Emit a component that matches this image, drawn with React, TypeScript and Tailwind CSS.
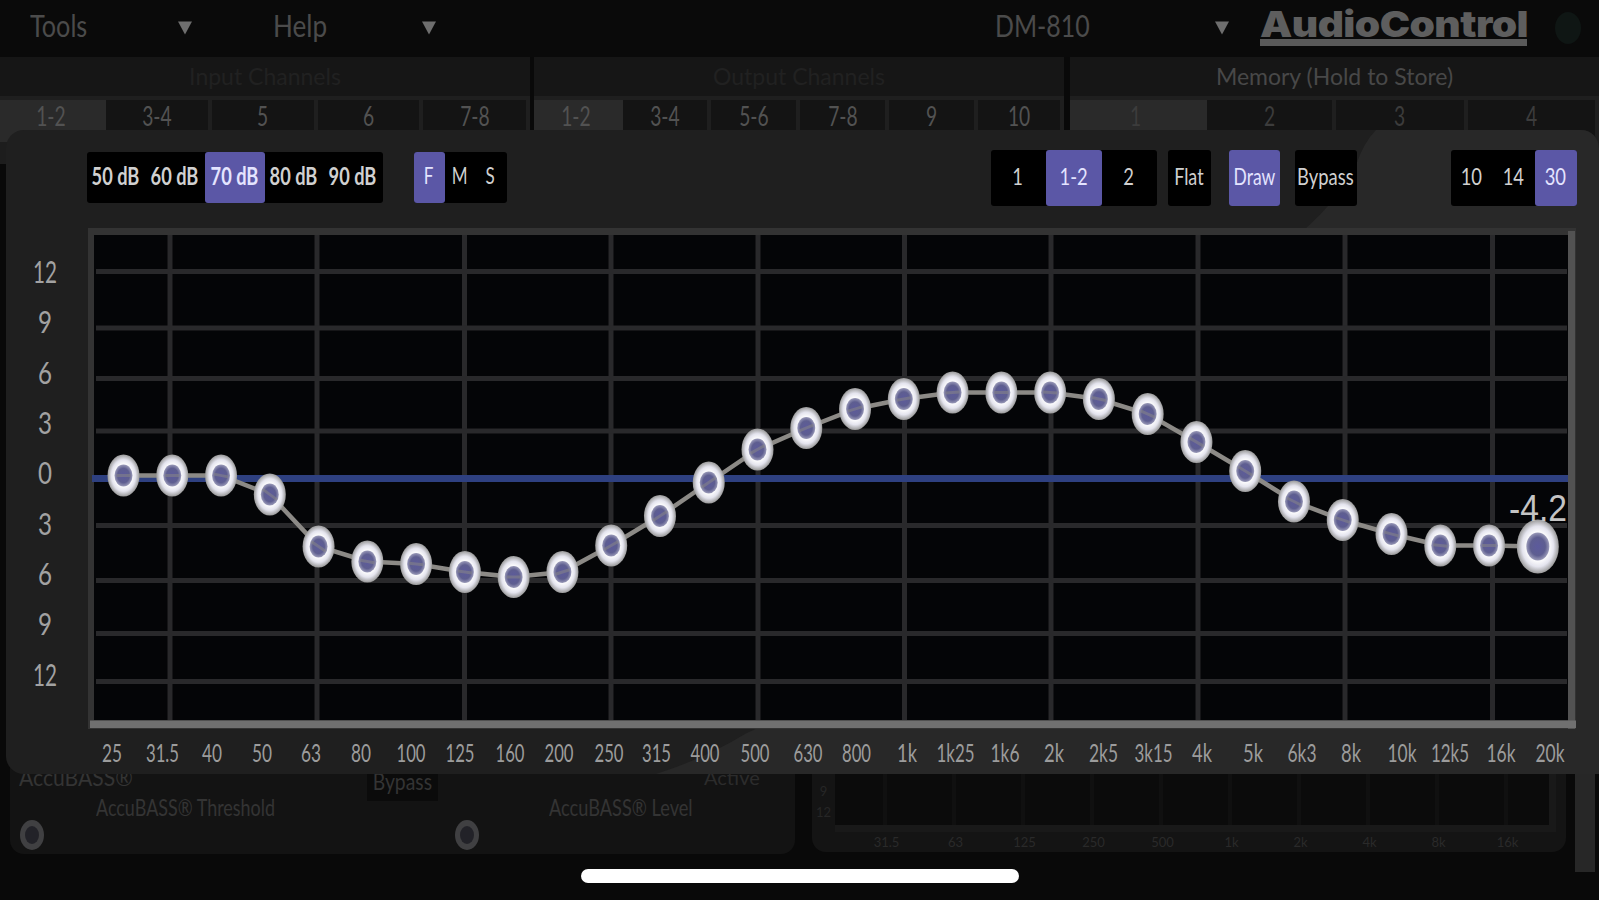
import { useState } from 'react';
import clsx from 'clsx';

const inputTabs = [
  { name: '1-2', width: 'w-[106px]' },
  { name: '3-4', width: 'w-[106px]' },
  { name: '5', width: 'w-[106px]' },
  { name: '6', width: 'w-[105px]' },
  { name: '7-8', width: 'w-[107px]' },
];

const outputTabs = [
  { name: '1-2', width: 'w-[89px]' },
  { name: '3-4', width: 'w-[88px]' },
  { name: '5-6', width: 'w-[89px]' },
  { name: '7-8', width: 'w-[89px]' },
  { name: '9', width: 'w-[89px]' },
  { name: '10', width: 'w-[86px]' },
];

const memoryTabs = [
  { name: '1', width: 'w-[137px]' },
  { name: '2', width: 'w-[129px]' },
  { name: '3', width: 'w-[132px]' },
  { name: '4', width: 'w-[131px]' },
];

// Chart geometry, relative to the top left corner of the panel at (6, 130)
const levels = [
  { label: '12', y: 142, line: 141.5 },
  { label: '9', y: 192, line: 198 },
  { label: '6', y: 242.5, line: 248.5 },
  { label: '3', y: 293, line: 301 },
  { label: '0', y: 343, line: 0 },
  { label: '3', y: 394, line: 395.5 },
  { label: '6', y: 444, line: 450.5 },
  { label: '9', y: 494, line: 503.5 },
  { label: '12', y: 545, line: 551.5 },
];

const gridX = [164, 311, 458.5, 605, 752, 898.5, 1045, 1192, 1339, 1486.5];

const bands = [
  { label: '25', x: 106, y: 345.5 },
  { label: '31.5', x: 156.5, y: 345.5 },
  { label: '40', x: 206, y: 345.5 },
  { label: '50', x: 256, y: 364.5 },
  { label: '63', x: 305, y: 416.5 },
  { label: '80', x: 355, y: 431.5 },
  { label: '100', x: 405, y: 434 },
  { label: '125', x: 454, y: 442 },
  { label: '160', x: 504, y: 447 },
  { label: '200', x: 553, y: 442 },
  { label: '250', x: 603, y: 415.5 },
  { label: '315', x: 650.5, y: 386 },
  { label: '400', x: 699, y: 352.5 },
  { label: '500', x: 749, y: 319.5 },
  { label: '630', x: 802, y: 298 },
  { label: '800', x: 850.5, y: 279 },
  { label: '1k', x: 901, y: 269 },
  { label: '1k25', x: 949.5, y: 262.5 },
  { label: '1k6', x: 999, y: 262.5 },
  { label: '2k', x: 1048, y: 262.5 },
  { label: '2k5', x: 1097.5, y: 269 },
  { label: '3k15', x: 1147.5, y: 284 },
  { label: '4k', x: 1196, y: 312 },
  { label: '5k', x: 1247, y: 341 },
  { label: '6k3', x: 1296, y: 371.5 },
  { label: '8k', x: 1345, y: 390 },
  { label: '10k', x: 1396, y: 404 },
  { label: '12k5', x: 1444, y: 415.5 },
  { label: '16k', x: 1495, y: 415.5 },
  { label: '20k', x: 1544, y: 416.5 },
];

const pointX = (i: number) => 117.5 + i * 48.77;

function Caret({ className }: { className?: string }) {
  return (
    <svg className={clsx('w-[14px] h-[14px] shrink-0', className)} viewBox="0 0 16 15">
      <path d="M0 0H16L8 15Z" fill="#6e6e6e" />
    </svg>
  );
}

type TabGroupProps = {
  title: string;
  titleClass: string;
  textClass: string;
  tabs: { name: string; width: string }[];
  className?: string;
};

function TabGroup({ title, titleClass, textClass, tabs, className }: TabGroupProps) {
  const [active, setActive] = useState(0);
  return (
    <section className={clsx('flex flex-col bg-[#161616]', className)}>
      <div className="h-[39px] flex items-center justify-center">
        <span className={clsx('text-[23px] leading-none whitespace-nowrap', titleClass)}>{title}</span>
      </div>
      <div className="flex h-[46px] border-t-4 border-[#1f1f1f]">
        {tabs.map((tab, i) => (
          <button
            key={tab.name}
            onClick={() => setActive(i)}
            className={clsx(
              'h-full shrink-0 flex justify-center pt-[3px] text-[26px] leading-none',
              tab.width,
              textClass,
              i === active ? 'bg-[#2a2a2a] pr-[5px]' : 'bg-[#141414] border-r-4 border-[#1f1f1f]'
            )}
          >
            <span className="scale-x-[0.74]">{tab.name}</span>
          </button>
        ))}
      </div>
    </section>
  );
}

type SegmentedProps = {
  options: string[];
  initial: string | null;
  optionClass: string;
  textClass: string;
  className?: string;
};

function Segmented({ options, initial, optionClass, textClass, className }: SegmentedProps) {
  const [selected, setSelected] = useState(initial);
  return (
    <div className={clsx('flex shrink-0 bg-black rounded-[3px]', className)}>
      {options.map((option) => (
        <button
          key={option}
          onClick={() => setSelected(option)}
          className={clsx(
            'h-full flex items-center justify-center rounded-[3px] whitespace-nowrap leading-none pb-1 pr-[2px]',
            optionClass,
            selected === option ? 'bg-[#5b57a6] text-[#e4e4ff]' : 'text-[#d0d0d0]'
          )}
        >
          <span className={clsx('shrink-0', textClass)}>{option}</span>
        </button>
      ))}
    </div>
  );
}

function Chart() {
  const path = bands.map((band, i) => `${pointX(i)},${band.y}`).join(' ');
  const last = bands.length - 1;
  return (
    <svg
      className="relative w-[1593px] h-[548px] block"
      viewBox="0 96 1593 548"
      fontFamily="Lato, 'Liberation Sans', sans-serif"
    >
      <defs>
        <radialGradient id="knob">
          <stop offset="0.5" stopColor="#ffffff" />
          <stop offset="0.75" stopColor="#e4e4ee" />
          <stop offset="1" stopColor="#999999" />
        </radialGradient>
        <radialGradient id="core">
          <stop offset="0" stopColor="#5c5a9c" />
          <stop offset="0.65" stopColor="#5e5e90" />
          <stop offset="1" stopColor="#9a9ab8" />
        </radialGradient>
      </defs>

      <rect x="82" y="98" width="1488" height="501" fill="#333333" />
      <rect x="88" y="105" width="1474" height="485" fill="#040507" />

      <g fill="#29292b">
        {gridX.map((x) => (
          <rect key={x} x={x - 2.5} y="105" width="5" height="485" />
        ))}
        {levels.map((l, i) => l.line > 0 && (
          <rect key={i} x="90" y={l.line - 2.5} width="1471" height="5" />
        ))}
      </g>

      <rect x="1562" y="101" width="7" height="498" fill="#525252" />
      <rect x="84" y="590.5" width="1486" height="7.5" fill="#707070" />
      <rect x="86" y="345" width="1476" height="7" fill="#2e4080" />

      <polyline points={path} fill="none" stroke="#8c8a86" strokeWidth="4.5" />
      {bands.map((band, i) => (
        <g key={band.label}>
          <ellipse cx={pointX(i)} cy={band.y} rx={i === last ? 21 : 16} ry={i === last ? 27 : 21} fill="url(#knob)" />
          <ellipse cx={pointX(i)} cy={band.y} rx={i === last ? 11.5 : 9} ry={i === last ? 14 : 11} fill="url(#core)" />
        </g>
      ))}
      {/* the curve stays faintly visible through the cores of the knobs */}
      {bands.slice(0, last).map((band, i) => {
        const slope = (bands[i + 1].y - bands[Math.max(i - 1, 0)].y) / 97.5;
        return (
          <line
            key={band.label}
            x1={pointX(i) - 7}
            y1={band.y - 7 * slope}
            x2={pointX(i) + 7}
            y2={band.y + 7 * slope}
            stroke="#8c8a86"
            strokeWidth="3"
            opacity="0.5"
          />
        );
      })}

      <text
        x="1503"
        y="391"
        fontSize="36"
        fontFamily="'Liberation Sans', sans-serif"
        fill="#c4c4c4"
        textLength="58"
        lengthAdjust="spacingAndGlyphs"
      >
        -4.2
      </text>

      <g fill="#a2a2a2" fontSize="31" textAnchor="middle">
        {levels.map((l, i) => (
          <text
            key={i}
            x="39"
            y={l.y + 11}
            textLength={l.label.length > 1 ? 24 : 14}
            lengthAdjust="spacingAndGlyphs"
          >
            {l.label}
          </text>
        ))}
      </g>
      <g fill="#9c9c9c" fontSize="25" textAnchor="middle">
        {bands.map((band) => (
          <text
            key={band.label}
            x={band.x}
            y="632"
            textLength={band.label === '31.5' ? 33 : band.label.length * 9 + 2}
            lengthAdjust="spacingAndGlyphs"
          >
            {band.label}
          </text>
        ))}
      </g>
    </svg>
  );
}

function EqPanel() {
  return (
    <div className="absolute left-[6px] top-[130px] w-[1593px] h-[644px] rounded-l-[18px] rounded-tr-[18px] overflow-hidden bg-[#1f1f1f]">
      {/* glossy highlight over the lower right half */}
      <svg className="absolute inset-0 w-full h-full" viewBox="0 0 1593 644">
        <path d="M1370 0Q1358 12 1350 35C1330 75 1300 98 1270 125C1080 340 880 540 739 604Q700 628 650 644H1593V0Z" fill="#282828" />
      </svg>
      <div className="relative flex h-[96px] pl-[81px] pt-[20px] items-start">
        <Segmented
          options={['50 dB', '60 dB', '70 dB', '80 dB', '90 dB']}
          initial="70 dB"
          optionClass="w-[59.2px]"
          textClass="text-[24px] font-bold scale-x-[0.76]"
          className="h-[51px] mt-[2px]"
        />
        <Segmented
          options={['F', 'M', 'S']}
          initial="F"
          optionClass="w-[31px]"
          textClass="text-[23px] scale-x-[0.74]"
          className="h-[51px] mt-[2px] ml-[31px]"
        />
        <Segmented
          options={['1', '1-2', '2']}
          initial="1-2"
          optionClass="w-[55.5px]"
          textClass="text-[23px] scale-x-[0.8]"
          className="h-[56px] ml-[484px]"
        />
        <Segmented
          options={['Flat']}
          initial={null}
          optionClass="w-[43px]"
          textClass="text-[23px] scale-x-[0.78]"
          className="h-[56px] ml-[11px]"
        />
        <Segmented
          options={['Draw']}
          initial="Draw"
          optionClass="w-[51px]"
          textClass="text-[23px] scale-x-[0.76]"
          className="h-[56px] ml-[18px]"
        />
        <Segmented
          options={['Bypass']}
          initial={null}
          optionClass="w-[62px]"
          textClass="text-[23px] scale-x-[0.8]"
          className="h-[56px] ml-[15px]"
        />
        <Segmented
          options={['10', '14', '30']}
          initial="30"
          optionClass="w-[42px]"
          textClass="text-[23px] scale-x-[0.8]"
          className="h-[56px] ml-[94px]"
        />
      </div>
      <Chart />
    </div>
  );
}

function DimKnob() {
  return (
    <svg className="w-6 h-[30px] shrink-0" viewBox="0 0 24 30">
      <ellipse cx="12" cy="15" rx="12" ry="15" fill="#404042" />
      <ellipse cx="12" cy="15" rx="7" ry="9" fill="#222228" />
    </svg>
  );
}

function MiniChart() {
  return (
    <div className="w-[754px] h-[114px] bg-[#141414] rounded-b-[14px] flex flex-col">
      <div className="flex h-[94px]">
        <div className="w-[23px] pt-[46px] flex flex-col items-center gap-[6px] text-[13px] leading-[15px] text-[#262626]">
          <span>9</span>
          <span>12</span>
        </div>
        <div className="w-[721px] h-full bg-[#0b0b0b] border-b-[7px] border-r-[7px] border-[#191919] pl-[48px] flex gap-[65px]">
          {Array.from({ length: 10 }, (_, i) => (
            <div key={i} className="w-1 h-full shrink-0 bg-[#101010]" />
          ))}
        </div>
      </div>
      <div className="flex pl-[40px] pt-[3px] text-[13px] leading-[15px] text-[#2a2a2a]">
        {['31.5', '63', '125', '250', '500', '1k', '2k', '4k', '8k', '16k'].map((f) => (
          <span key={f} className="w-[69px] shrink-0 text-center">{f}</span>
        ))}
      </div>
    </div>
  );
}

export default function App() {
  return (
    <div className="relative w-[1599px] h-[900px] overflow-hidden bg-[#090909] font-[Lato,'Liberation_Sans',sans-serif] flex flex-col">
      <header className="h-[57px] shrink-0 flex items-start pt-[8px] bg-[#0a0a0a] text-[30px] leading-[35px] text-[#4b4b4b]">
        <div className="w-[240px] pl-[30px] flex">
          <span className="w-[148px] origin-left scale-x-[0.84]">Tools</span>
          <Caret className="mt-[13px]" />
        </div>
        <div className="w-[755px] pl-[33px] flex">
          <span className="w-[149px] origin-left scale-x-[0.87]">Help</span>
          <Caret className="mt-[13px]" />
        </div>
        <div className="w-[265px] flex">
          <span className="w-[220px] origin-left scale-x-[0.83]">DM-810</span>
          <Caret className="mt-[13px]" />
        </div>
        <div className="w-[267px] h-[38px] shrink-0 border-b-[7px] border-[#5a5a5a] text-[#5e5e5e]">
          <span className="block origin-left scale-x-[1.13] font-[Inter,sans-serif] font-black text-[36px] leading-[32px] tracking-[-0.5px]">
            AudioControl
          </span>
        </div>
        <div className="ml-[28px] mt-[4px] w-[26px] h-[32px] rounded-[50%] bg-[#0f1614]" />
      </header>

      <div className="flex h-[85px] shrink-0">
        <TabGroup
          title="Input Channels"
          titleClass="text-[#212121]"
          textClass="text-[#525252]"
          tabs={inputTabs}
          className="w-[530px]"
        />
        <TabGroup
          title="Output Channels"
          titleClass="text-[#212121]"
          textClass="text-[#525252]"
          tabs={outputTabs}
          className="w-[530px] ml-[4px]"
        />
        <TabGroup
          title="Memory (Hold to Store)"
          titleClass="text-[#484848]"
          textClass="text-[#3c3c3c]"
          tabs={memoryTabs}
          className="w-[529px] ml-[6px]"
        />
      </div>
      <div className="h-[22px] shrink-0 bg-[#1d1d1d]" />

      <div className="flex pl-[10px] mt-[574px]">
        <section className="w-[785px] h-[116px] bg-[#131313] rounded-b-[14px] pt-[27px] text-[#343434]">
          <div className="flex h-[36px] pl-[9px] text-[24px] leading-[24px]">
            <span className="w-[348px] origin-left scale-x-[0.88]">AccuBASS®</span>
            <div className="w-[71px] h-[36px] bg-[#0b0b0b] flex justify-center text-[23px] leading-[33px]">
              <span className="scale-x-[0.84]">Bypass</span>
            </div>
            <span className="ml-[266px] origin-left text-[20px] leading-[24px] text-[#2c2c2c]">Active</span>
          </div>
          <div className="flex h-[12px] text-[23px] leading-[12px]">
            <span className="w-[454px] pl-[86px] whitespace-nowrap">
              <span className="inline-block origin-left scale-x-[0.78]">AccuBASS® Threshold</span>
            </span>
            <span className="pl-[85px] whitespace-nowrap">
              <span className="inline-block origin-left scale-x-[0.79]">AccuBASS® Level</span>
            </span>
          </div>
          <div className="flex gap-[411px] pl-[10px] pt-[7px]">
            <DimKnob />
            <DimKnob />
          </div>
        </section>
        <section className="ml-[17px]">
          <MiniChart />
        </section>
        <div className="ml-[9px] w-[20px] h-[134px] bg-[#272727]" />
      </div>

      <EqPanel />

      <div className="absolute left-[581px] top-[869px] w-[438px] h-[14px] rounded-full bg-white" />
    </div>
  );
}
